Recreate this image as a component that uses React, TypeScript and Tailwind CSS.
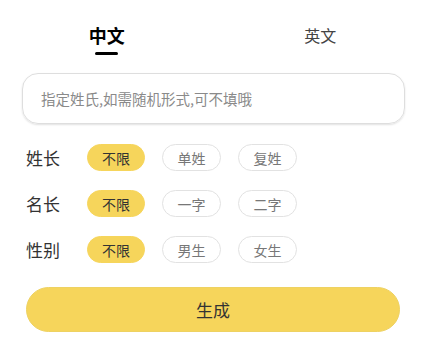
import { useState } from "react";

const font = { fontFamily: '"Noto Sans CJK SC", "Noto Sans", sans-serif' };

function Chip({ label, active, onClick }: { label: string; active: boolean; onClick: () => void }) {
  return (
    <button
      onClick={onClick}
      className={
        active
          ? "w-[58px] h-[27px] rounded-full bg-[#f6d55b] border border-[#f6d55b] text-[14px] leading-none text-[#333]"
          : "w-[59px] h-[27px] rounded-full bg-white border border-[#e2e2e2] text-[14px] leading-none text-[#777]"
      }
    >
      {label}
    </button>
  );
}

function OptionRow({ title, options }: { title: string; options: string[] }) {
  const [sel, setSel] = useState(0);
  return (
    <div className="flex items-center h-[27px]">
      <span className="w-[87px] shrink-0 pl-[26px] text-[17px] leading-none text-[#333] whitespace-nowrap">{title}</span>
      <div className="flex gap-[17px]">
        {options.map((o, i) => (
          <Chip key={o} label={o} active={sel === i} onClick={() => setSel(i)} />
        ))}
      </div>
    </div>
  );
}

export default function App() {
  const [tab, setTab] = useState(0);
  return (
    <div className="w-[427px] h-[341px] bg-white overflow-hidden" style={font}>
      <div className="flex pt-[23px]">
        {["中文", "英文"].map((t, i) => (
          <button key={t} onClick={() => setTab(i)} className="flex-1 flex flex-col items-center">
            <span
              className={
                tab === i
                  ? "text-[18px] leading-[24px] font-bold text-black"
                  : "text-[16px] leading-[24px] text-[#444]"
              }
            >
              {t}
            </span>
            <span className={tab === i ? "mt-[5px] w-[23px] h-[3px] rounded-full bg-black" : "mt-[5px] w-[23px] h-[3px]"} />
          </button>
        ))}
      </div>
      <div className="px-[22px] mt-[18px]">
        <input
          placeholder="指定姓氏,如需随机形式,可不填哦"
          className="w-full h-[51px] rounded-[16px] border border-[#dedede] shadow-[0_1px_2px_rgba(0,0,0,0.12)] px-[18px] text-[14.5px] text-[#333] placeholder:text-[#8a8a8a] outline-none"
        />
      </div>
      <div className="mt-[20px] flex flex-col gap-[19px]">
        <OptionRow title="姓长" options={["不限", "单姓", "复姓"]} />
        <OptionRow title="名长" options={["不限", "一字", "二字"]} />
        <OptionRow title="性别" options={["不限", "男生", "女生"]} />
      </div>
      <div className="px-[26px] mt-[24px] pr-[27px]">
        <button className="w-full h-[45px] rounded-full bg-[#f6d55b] border border-[#eed262] text-[17px] text-[#333]">
          生成
        </button>
      </div>
    </div>
  );
}
